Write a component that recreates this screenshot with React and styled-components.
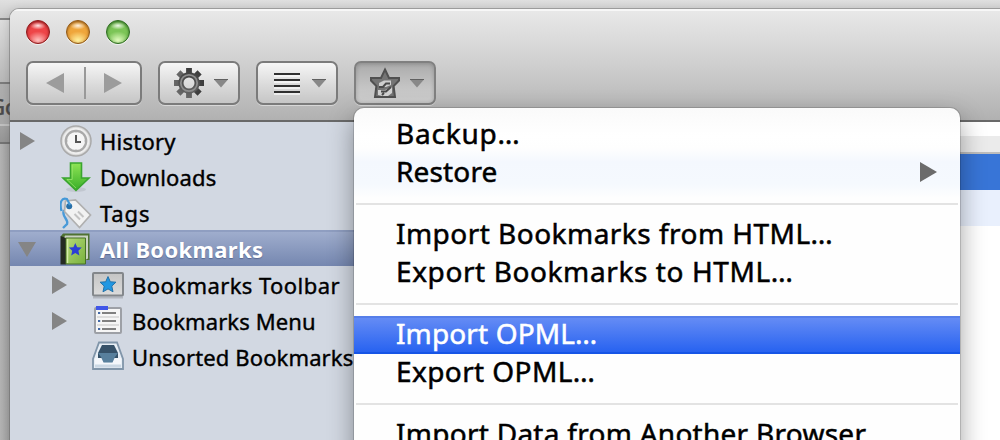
import React from "react";
import styled, { createGlobalStyle } from "styled-components";

const GlobalStyle = createGlobalStyle`
  * { box-sizing: border-box; }
  html, body { margin: 0; padding: 0; overflow: hidden; }
  body { font-family: "Noto Sans", "Liberation Sans", sans-serif; color: #000; }
  svg { display: block; flex: none; }
`;

const Desktop = styled.div`
  position: relative;
  width: 1000px;
  height: 440px;
  overflow: hidden;
  background: #acacac;
`;

const BackWindow = styled.div`
  display: flex;
  flex-direction: column;
  height: 440px;
`;

const BackTitle = styled.div`
  height: 20px;
  background: linear-gradient(#e0e0e0, #cdcdcd);
  border-bottom: 2px solid #858585;
`;

const BackToolbar = styled.div`
  height: 64px;
  background: linear-gradient(#dedede, #b9b9b9);
  border-bottom: 2px solid #7c7c7c;
`;

const BackTabs = styled.div`
  height: 42px;
  padding: 7px 0 0 0;
  background: linear-gradient(#b0b0b0, #aaa);
  border-bottom: 2px solid #c2c2c2;
  color: #4b4b4b;
  font-size: 22px;
  line-height: 30px;
  text-indent: -11px;
  white-space: nowrap;
  -webkit-text-stroke: 0.6px;
`;

const BackStrip = styled.div`
  height: 18px;
  background: linear-gradient(#a3a3a3, #979797);
  border-bottom: 2px solid #747474;
`;

const BackPage = styled.div`
  flex: 1;
  width: 10px;
  background: linear-gradient(90deg, #b4b4b4, #a2a2a2);
`;

const Window = styled.section`
  position: absolute;
  left: 10px;
  top: 9px;
  width: 1010px;
  height: 460px;
  display: flex;
  flex-direction: column;
  border-radius: 9px 0 0 0;
  box-shadow: 0 0 0 1px rgba(90, 90, 90, 0.4), 0 2px 12px rgba(0, 0, 0, 0.2);
  overflow: hidden;
`;

const Chrome = styled.header`
  height: 113px;
  background: linear-gradient(#e9e9e9, #cfcfcf 50%, #b1b1b1);
  border-bottom: 2px solid #696969;
  box-shadow: inset 0 2px 0 #f7f7f7;
`;

const Lights = styled.div`
  display: flex;
  gap: 16px;
  padding: 11px 0 0 16px;
  height: 52px;
`;

const Light = styled.span`
  width: 24px;
  height: 24px;
  border-radius: 50%;
  border: 1px solid ${(p) => p.$edge};
  background:
    radial-gradient(ellipse 8px 4px at 50% 21%, rgba(255, 255, 255, 0.85), rgba(255, 255, 255, 0) 100%),
    radial-gradient(ellipse 11px 9px at 50% 88%, ${(p) => p.$glow}, transparent 100%),
    ${(p) => p.$color};
  box-shadow: inset 0 1px 3px ${(p) => p.$edge}, 0 1px 0 rgba(255, 255, 255, 0.6);
`;

const Toolbar = styled.div`
  display: flex;
  gap: 16px;
  padding-left: 16px;
`;

const ToolButton = styled.div`
  display: flex;
  align-items: center;
  width: ${(p) => p.$width}px;
  height: 44px;
  padding: ${(p) => p.$pad || "0 10px 0 13px"};
  gap: ${(p) => p.$gap ?? 9}px;
  border: 2px solid ${(p) => (p.$pressed ? "#808080" : "#7b7b7b")};
  border-radius: 7px;
  background: ${(p) =>
    p.$pressed ? "linear-gradient(#ababab, #c4c4c4 60%, #cecece)" : "linear-gradient(#f6f6f6, #dadada 55%, #c6c6c6)"};
  box-shadow: ${(p) => (p.$pressed ? "inset 0 1px 4px rgba(0,0,0,.2), " : "")} 0 1px 0 rgba(255, 255, 255, 0.45);
`;

const Spaced = styled.span`
  display: flex;
  margin-left: ${(p) => p.$left}px;
`;

const Divider = styled.span`
  width: 2px;
  height: 32px;
  background: #999;
`;

const Body = styled.div`
  flex: 1;
  display: flex;
`;

const Sidebar = styled.nav`
  width: 480px;
  background: #d2d8e2;
`;

const TreeRow = styled.div`
  display: flex;
  align-items: center;
  height: 36px;
  padding-top: ${(p) => (p.$selected ? 0 : 2)}px;
  padding-left: ${(p) => (p.$level ? 40 : 8)}px;
  color: ${(p) => (p.$selected ? "#fff" : "#000")};
  background: ${(p) => (p.$selected ? "linear-gradient(#9fadcd, #7587b0)" : "none")};
  border-top: ${(p) => (p.$selected ? "2px solid #8f9ec1" : "0")};
`;

const Twisty = styled.span`
  display: flex;
  width: 42px;
  padding-left: ${(p) => (p.$open === "down" ? 0 : 2)}px;
`;

const TreeLabel = styled.span`
  margin-left: 8px;
  font-size: 22px;
  line-height: 32px;
  font-weight: ${(p) => (p.$bold ? 700 : 400)};
  letter-spacing: ${(p) => p.$track}px;
  white-space: nowrap;
  -webkit-text-stroke: ${(p) => (p.$bold ? 0 : 0.4)}px;
  text-shadow: ${(p) => (p.$bold ? "0 1px 1px rgba(50,65,110,.5)" : "none")};
`;

const Content = styled.main`
  flex: 1;
  background: #fff;
`;

const ColumnHeader = styled.div`
  height: 32px;
  background: linear-gradient(#fff 47%, #ebebeb 48%);
  border-bottom: 2px solid #bdbdbd;
`;

const ContentRow = styled.div`
  height: 36px;
  background: ${(p) => p.$color};
`;

const Menu = styled.div`
  position: absolute;
  left: 354px;
  top: 108px;
  width: 606px;
  height: 360px;
  padding-top: 8px;
  border-radius: 10px 10px 0 0;
  background: linear-gradient(#fafafa, #fff 28px, #fefefe 40px, #f4f8fe 54px, #f5f9fe 76px, #fefefe 90px);
  box-shadow: 0 0 0 1px rgba(0, 0, 0, 0.14), 0 10px 26px rgba(0, 0, 0, 0.38);
`;

const MenuItem = styled.div`
  display: flex;
  align-items: center;
  justify-content: space-between;
  height: 38px;
  padding: 0 23px 2px 42px;
  font-size: 28px;
  line-height: 36px;
  white-space: nowrap;
  letter-spacing: ${(p) => p.$track}px;
  -webkit-text-stroke: 0.5px;
  color: ${(p) => (p.$active ? "#fff" : "#000")};
  background: ${(p) => (p.$active ? "linear-gradient(#688ef5, #2460f0)" : "none")};
  box-shadow: ${(p) => (p.$active ? "inset 0 2px 0 #567ee9, inset 0 -2px 0 #1655e6" : "none")};
`;

const MenuLabel = styled.span`
  padding-bottom: 2px;
`;

const Separator = styled.div`
  height: 24px;
  margin: 0 2px;
  padding-top: 11px;
  &::before {
    content: "";
    display: block;
    height: 2px;
    background: #e3e3e3;
  }
`;

const Triangle = ({ dir = "right", w = 15, h = 18, color = "#858585" }) => {
  const d = {
    right: `M0 0L${w} ${h / 2}L0 ${h}Z`,
    left: `M${w} 0L0 ${h / 2}L${w} ${h}Z`,
    down: `M0 0H${w}L${w / 2} ${h}Z`,
  }[dir];
  return (
    <svg width={w} height={h}>
      <path d={d} fill={color} />
    </svg>
  );
};

const DropArrow = () => (
  <svg width="14" height="9">
    <path d="M0 0.5H14L7 8.5Z" fill="#888" />
    <path d="M0 0.5H14" stroke="#606060" />
  </svg>
);

const Gear = () => (
  <svg width="32" height="32" viewBox="-16 -16 32 32">
    <defs>
      <linearGradient id="gear" x1="0" y1="-15" x2="0" y2="15" gradientUnits="userSpaceOnUse">
        <stop offset="0" stopColor="#3c3c3c" />
        <stop offset="1" stopColor="#686868" />
      </linearGradient>
    </defs>
    <g fill="url(#gear)">
      {[0, 45, 90, 135].map((a) => (
        <path key={a} transform={`rotate(${a})`} d="M-2.9-15H2.9V-7H-2.9ZM-2.9 15H2.9V7H-2.9Z" />
      ))}
    </g>
    <circle r="8.1" fill="none" stroke="url(#gear)" strokeWidth="5.2" />
    <circle r="8.2" fill="none" stroke="#8c8c8c" strokeWidth="1.8" />
  </svg>
);

const Lines = () => (
  <svg width="28" height="24">
    <path d="M1 5H27M1 11H27M1 17H27M1 23H27" stroke="#fff" strokeWidth="2" opacity=".6" />
    <path d="M1 3H27M1 9H27M1 15H27M1 21H27" stroke="#303030" strokeWidth="2" />
  </svg>
);

const StarTool = () => (
  <svg width="32" height="32">
    <path
      d="M16 2.5L20 11H30V13.5L24.6 19L26 30H6L7.4 19L2 13.5V11H12Z"
      fill="#747474"
      stroke="#505050"
      strokeWidth="2"
    />
    <path d="M10 20V16L15 13.5H22V18L17 20Z" fill="#cdcdcd" />
    <path d="M9 28V23H16L23 20V26L19 29H13Z" fill="#d2d2d2" />
    <path d="M10 20H14L17 16.5H21M12 24.5H17L22 20M13 28L15 26" stroke="#4a4a4a" strokeWidth="2" fill="none" />
  </svg>
);

const ClockIcon = () => (
  <svg width="32" height="32">
    <circle cx="16" cy="16" r="15" fill="#d9d9d9" stroke="#aaa" strokeWidth="1.5" />
    <circle cx="16" cy="16" r="12.2" fill="none" stroke="#eee" strokeWidth="2" />
    <circle cx="16" cy="16" r="10.2" fill="#f5f5f5" stroke="#a9a9a9" strokeWidth="2.2" />
    <path d="M16 10V17H21" fill="none" stroke="#555" strokeWidth="2" />
    <path d="M16 8V7M16 24V25M8 16H7M24 16H25" stroke="#bbb" />
  </svg>
);

const DownloadIcon = () => (
  <svg width="32" height="32">
    <defs>
      <linearGradient id="down" x1="0" y1="0" x2="0" y2="1">
        <stop offset="0" stopColor="#8fe455" />
        <stop offset="1" stopColor="#38ae28" />
      </linearGradient>
    </defs>
    <ellipse cx="16" cy="28.5" rx="10" ry="2.5" fill="#000" opacity=".08" />
    <path d="M10.5 2H21.5V17H29L16 29.5L3 17H10.5Z" fill="url(#down)" stroke="#3aa52f" strokeWidth="1.6" />
    <path d="M12.2 4V18.5H7L16 27" fill="none" stroke="#a9ee7c" strokeWidth="1" opacity=".6" />
  </svg>
);

const TagIcon = () => (
  <svg width="32" height="32">
    <path d="M4 13C1 20 9 22 7 27L3 31" fill="none" stroke="#4a9ad8" strokeWidth="2.4" />
    <path d="M5.5 4L15.5 3L30.5 18L19.5 30.5L4.5 14.5Z" fill="#f2f2f2" stroke="#b0b0b0" strokeWidth="1.7" />
    <path d="M14.5 17L20 22.5M18 14.5L23.5 20" stroke="#c3c3c3" strokeWidth="2" />
    <circle cx="9.2" cy="9.2" r="3" fill="#2870a8" />
    <path d="M1.5 14C-1 5 2 0 7 2L10 8" fill="none" stroke="#4398d8" strokeWidth="2.2" />
  </svg>
);

const STAR = "M0-6.5L1.9-2.2L6.5-1.9L3.1 1.3L4.1 6L0 3.6L-4.1 6L-3.1 1.3L-6.5-1.9L-1.9-2.2Z";

const BookIcon = () => (
  <svg width="32" height="32">
    <defs>
      <linearGradient id="book" x1="0" y1="0" x2="1" y2="1">
        <stop offset="0" stopColor="#b6d979" />
        <stop offset="1" stopColor="#78b13c" />
      </linearGradient>
    </defs>
    <path d="M3 0.5H29.5V27H24V31H1V3Z" fill="#4f7232" />
    <path d="M5 2.5H28V25.5L25 27V5H4Z" fill="#c9d2c2" />
    <path d="M0.5 3L6 5V31.5H0.5Z" fill="#252b22" />
    <path d="M6 5H25.5V31H6Z" fill="url(#book)" stroke="#487126" strokeWidth="1" />
    <path d="M7.5 6V30" stroke="#d5edaa" strokeWidth="1.5" />
    <path d={STAR} transform="translate(15.3 16.5)" fill="#2c3ed4" />
  </svg>
);

const ToolbarIcon = () => (
  <svg width="32" height="32">
    <defs>
      <linearGradient id="panel" x1="0" y1="0" x2="0" y2="1">
        <stop offset="0" stopColor="#c4c4c4" />
        <stop offset="1" stopColor="#dcdcdc" />
      </linearGradient>
    </defs>
    <path d="M1 28.5H31" stroke="#000" opacity=".15" strokeWidth="2" />
    <rect x="1" y="4" width="30" height="22.5" rx="1" fill="url(#panel)" stroke="#83878b" strokeWidth="2" />
    <path d={STAR} transform="translate(16 15.5) scale(1.22)" fill="#2197e2" stroke="#2170a8" strokeWidth=".8" />
  </svg>
);

const MenuIcon = () => (
  <svg width="32" height="32">
    <rect x="3" y="3" width="26" height="25" rx="1" fill="#f6f6f6" stroke="#9da0a6" strokeWidth="2" />
    <rect x="4" y="1" width="12" height="4" fill="#4056e8" />
    <path d="M5 12H27M5 20H27" stroke="#ddd" strokeWidth="2" />
    <path d="M10 8H24M10 16H24M10 24H24" stroke="#808080" strokeWidth="1.8" />
    <path d="M6 8H8.2M6 16H8.2M6 24H8.2" stroke="#4268a6" strokeWidth="2" />
  </svg>
);

const InboxIcon = () => (
  <svg width="32" height="32">
    <path d="M7 1.5H25L31 18V28H1V18Z" fill="#e7eef5" stroke="#8095a9" strokeWidth="1.8" />
    <path d="M10 4H22L26 12V17H6V12Z" fill="#365269" />
    <path d="M3 17H9L12 22H20L23 17H29V26H3Z" fill="#f4f7fb" />
    <path d="M6 12H26L23 16L20.5 21.5H11.5L9 16Z" fill="#58809d" />
    <path d="M3 25H29" stroke="#cbd8e4" strokeWidth="3" />
  </svg>
);

const TREE = [
  { label: "History", icon: ClockIcon, open: "right", track: 0.25 },
  { label: "Downloads", icon: DownloadIcon, track: 0.12 },
  { label: "Tags", icon: TagIcon, track: 0.9 },
  { label: "All Bookmarks", icon: BookIcon, open: "down", selected: true, track: 0.33 },
  { label: "Bookmarks Toolbar", icon: ToolbarIcon, open: "right", level: 1, track: 0.43 },
  { label: "Bookmarks Menu", icon: MenuIcon, open: "right", level: 1, track: 0.1 },
  { label: "Unsorted Bookmarks", icon: InboxIcon, level: 1, track: 0.12 },
];

const MENU = [
  { label: "Backup…", track: 0.8 },
  { label: "Restore", sub: true, track: 0.15 },
  null,
  { label: "Import Bookmarks from HTML…", track: 0.47 },
  { label: "Export Bookmarks to HTML…", track: 0.6 },
  null,
  { label: "Import OPML…", active: true, track: 0.13 },
  { label: "Export OPML…", track: 0.4 },
  null,
  { label: "Import Data from Another Browser", track: 0.27 },
];

export default function App() {
  return (
    <Desktop>
      <GlobalStyle />
      <BackWindow>
        <BackTitle />
        <BackToolbar />
        <BackTabs>Go</BackTabs>
        <BackStrip />
        <BackPage />
      </BackWindow>
      <Window>
        <Chrome>
          <Lights>
            <Light $color="#ee4548" $edge="#8c1a1c" $glow="#ffc2c0" />
            <Light $color="#efa63c" $edge="#8e5719" $glow="#fff2a0" />
            <Light $color="#7cc557" $edge="#2e6b22" $glow="#e2fcc0" />
          </Lights>
          <Toolbar>
            <ToolButton $width={116} $pad="0 0 0 18px" $gap={0}>
              <Triangle dir="left" w={18} h={20} color="#9c9c9c" />
              <Spaced $left={20}><Divider /></Spaced>
              <Spaced $left={18}><Triangle w={18} h={20} color="#9c9c9c" /></Spaced>
            </ToolButton>
            <ToolButton $width={82}><Gear /><DropArrow /></ToolButton>
            <ToolButton $width={82} $pad="0 10px 0 15px" $gap={11}><Lines /><DropArrow /></ToolButton>
            <ToolButton $width={82} $pressed><StarTool /><DropArrow /></ToolButton>
          </Toolbar>
        </Chrome>
        <Body>
          <Sidebar>
            {TREE.map(({ label, icon: Icon, open, level, selected, track }) => (
              <TreeRow key={label} $level={level} $selected={selected}>
                <Twisty $open={open}>
                  {open && <Triangle dir={open} w={open === "down" ? 18 : 15} h={open === "down" ? 15 : 18} />}
                </Twisty>
                <Icon />
                <TreeLabel $bold={selected} $track={track}>{label}</TreeLabel>
              </TreeRow>
            ))}
          </Sidebar>
          <Content>
            <ColumnHeader />
            <ContentRow $color="#3875d7" />
            <ContentRow $color="#e9f0fd" />
          </Content>
        </Body>
      </Window>
      <Menu>
        {MENU.map((item, i) =>
          item ? (
            <MenuItem key={item.label} $active={item.active} $track={item.track}>
              <MenuLabel>{item.label}</MenuLabel>
              {item.sub && <Triangle w={17} h={20} color="#6b6b6b" />}
            </MenuItem>
          ) : (
            <Separator key={i} />
          )
        )}
      </Menu>
    </Desktop>
  );
}
